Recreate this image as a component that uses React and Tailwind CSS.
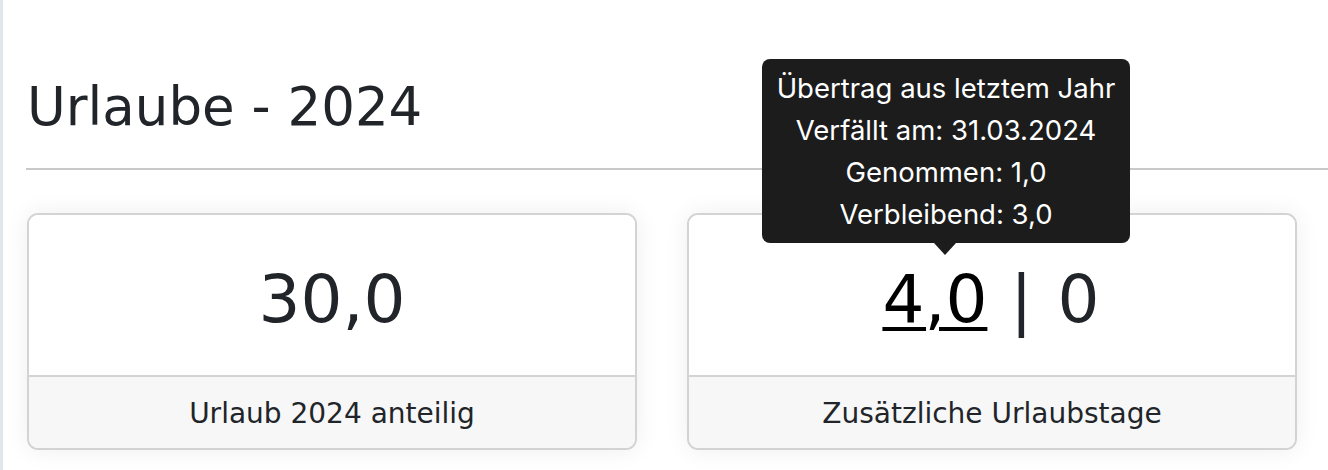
export default function App() {
  return (
    <div className="relative w-[1328px] h-[470px] bg-white overflow-hidden border-l-[3px] border-[#e1e5ec]" style={{ fontFamily: '"DejaVu Sans", sans-serif' }}>
      <div className="pt-[77px] pl-[24px]">
        <h2 className="text-[53px] leading-[60px] text-[#212529] font-normal">Urlaube - 2024</h2>
        <div className="mt-[31px] -ml-[1px] h-[2px] bg-[#c8c8c8]"></div>
        <div className="mt-[43px] mr-[31px] grid grid-cols-2 gap-[50px]">
          <div className="rounded-[11px] border-2 border-[#d3d3d3] overflow-hidden shadow-[0_0_24px_rgba(0,0,0,0.07)]">
            <div className="h-[160px] bg-white flex items-center justify-center pt-[8px] text-[66px] text-[#212529]">30,0</div>
            <div className="h-[73px] border-t-2 border-[#d3d3d3] bg-[#f7f7f7] flex items-center justify-center pt-[3px] text-[28px] text-[#212529]">Urlaub 2024 anteilig</div>
          </div>
          <div className="rounded-[11px] border-2 border-[#d3d3d3] overflow-hidden shadow-[0_0_24px_rgba(0,0,0,0.07)]">
            <div className="h-[160px] bg-white flex items-center justify-center pt-[8px] text-[66px] text-[#212529] whitespace-pre">
              <span className="text-black underline decoration-[4px] underline-offset-[5px]">4,0</span>
              <span className="tracking-[2px]"> | 0</span>
            </div>
            <div className="h-[73px] border-t-2 border-[#d3d3d3] bg-[#f7f7f7] flex items-center justify-center pt-[3px] text-[28px] text-[#212529]">Zusätzliche Urlaubstage</div>
          </div>
        </div>
      </div>
      <div className="absolute left-[759px] top-[59px] w-[368px] rounded-[8px] bg-[#1c1c1c] py-[8px] text-center text-white text-[27.5px] leading-[42px]" style={{ fontFamily: 'Inter, "Liberation Sans", sans-serif' }}>
        <div>Übertrag aus letztem Jahr</div>
        <div>Verfällt am: 31.03.2024</div>
        <div>Genommen: 1,0</div>
        <div>Verbleibend: 3,0</div>
        <div className="absolute left-[172px] bottom-[-12px] w-0 h-0 border-l-[11px] border-r-[11px] border-t-[12px] border-l-transparent border-r-transparent border-t-[#1c1c1c]"></div>
      </div>
    </div>
  );
}
